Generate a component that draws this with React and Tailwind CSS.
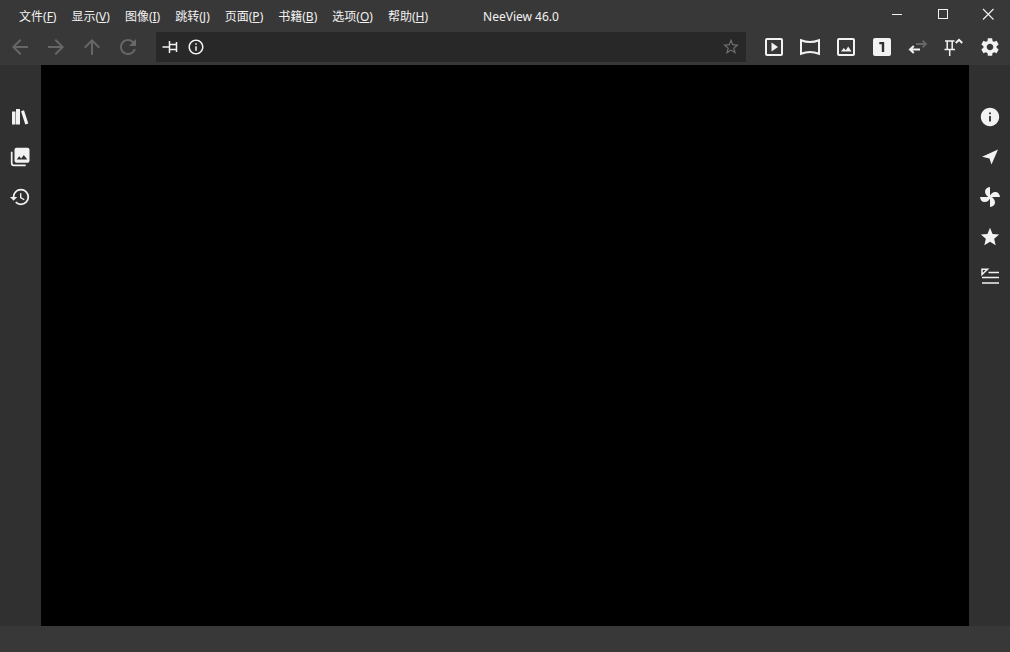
import React, { useState } from 'react';
import {
  MdArrowBack,
  MdArrowForward,
  MdArrowUpward,
  MdHistory,
  MdInfo,
  MdOutlineInfo,
  MdRefresh,
  MdSettings,
  MdStar,
} from 'react-icons/md';

const menus = [
  { label: '文件', accessKey: 'F' },
  { label: '显示', accessKey: 'V' },
  { label: '图像', accessKey: 'I' },
  { label: '跳转', accessKey: 'J' },
  { label: '页面', accessKey: 'P' },
  { label: '书籍', accessKey: 'B' },
  { label: '选项', accessKey: 'O' },
  { label: '帮助', accessKey: 'H' },
];

const Icon = ({ children, className = 'h-5 w-5' }) => (
  <svg viewBox="0 0 20 20" className={className} fill="none" stroke="currentColor" aria-hidden="true">
    {children}
  </svg>
);

// Window caption icons
const MinimizeIcon = () => (
  <Icon>
    <path d="M5 10.5h10" />
  </Icon>
);

const MaximizeIcon = () => (
  <Icon>
    <rect x="5.5" y="5.5" width="9" height="9" />
  </Icon>
);

const CloseIcon = () => (
  <Icon>
    <path d="M5 5l10.5 10.5M15.5 5L5 15.5" strokeWidth="1.1" />
  </Icon>
);

// Address bar icons
const PinSideIcon = () => (
  <Icon>
    <path d="M1.5 10H8M8.5 4v12M15.5 5v10M8.500 7.500h7M8.500 12.500h7" strokeWidth="1.5" />
  </Icon>
);

const StarOutlineIcon = () => (
  <Icon>
    <path d="M10 3.3l1.7 4.400 4.700.4-3.600 3 1.200 4.500L10 13.100l-4 2.500 1.200-4.500-3.600-3 4.700-.4z" strokeWidth="1.2" />
  </Icon>
);

// Toolbar icons
const SlideShowIcon = () => (
  <Icon>
    <rect x="2" y="2" width="16" height="16" rx="1" strokeWidth="2" />
    <path d="M7.5 5.500v9l6.500-4.500z" fill="currentColor" stroke="none" />
  </Icon>
);

const PanoramaIcon = () => (
  <Icon>
    <path d="M1 3.200Q10 6.800 19 3.200v13.600Q10 13.200 1 16.800z" strokeWidth="2" />
  </Icon>
);

const PictureIcon = () => (
  <Icon>
    <rect x="2" y="2" width="16" height="16" rx="1" strokeWidth="2" />
    <path d="M5 14.500l2.800-3.500 2 2.200 2.400-3.700 3.300 5z" fill="currentColor" stroke="none" />
  </Icon>
);

const SinglePageIcon = () => (
  <Icon>
    <rect x="1" y="1" width="18" height="18" rx="2" fill="currentColor" stroke="none" />
    <path d="M7.300 6.100H11V15" stroke="#303030" strokeWidth="2.4" />
  </Icon>
);

const DirectionIcon = () => (
  <Icon>
    <path d="M8 7h9M14.500 3.700L18 7l-3.500 3.300" stroke="#666666" strokeWidth="1.8" />
    <path d="M12 12.500H3M5.800 9L2 12.500 5.800 16" strokeWidth="2" />
  </Icon>
);

const PinUpIcon = () => (
  <Icon>
    <path d="M1 4h9.500M3.200 4v8M8.200 4v8M.500 12.500H11M5.700 12.500V19" strokeWidth="1.5" />
    <path d="M11.800 6L15 2.800 18.200 6" strokeWidth="2" />
  </Icon>
);

// Side panel icons
const BookshelfIcon = () => (
  <Icon>
    <path d="M2 4.500h3.500v13H2zM6 2h4v15.500H6zM11 4.200l3-.9 4.300 13.300-3 1z" fill="currentColor" stroke="none" />
  </Icon>
);

const PageListIcon = () => (
  <Icon>
    <path d="M1.700 4.700v11.600q0 2 2 2h12" strokeWidth="1.7" />
    <rect x="4.5" y=".7" width="15" height="15" rx="2" fill="currentColor" stroke="none" />
    <path d="M6.700 12.500l2.500-3.300 2 2.300 2.600-3.500 3.500 4.500z" fill="#303030" stroke="none" />
  </Icon>
);

const NavigateIcon = () => (
  <Icon>
    <path d="M18 2.500L11.500 17.500 9.500 11.500 2 9.700z" fill="currentColor" stroke="none" />
  </Icon>
);

const FanIcon = () => (
  <Icon>
    <g fill="currentColor" stroke="none">
      <path d="M10 11C7 9.500 5 7.500 5 4.500 5 2 7 .3 10 0z" />
      <path d="M9 10C10.500 7 12.500 5 15.500 5 18 5 19.700 7 20 10z" />
      <path d="M10 9C13 10.500 15 12.500 15 15.500 15 18 13 19.700 10 20z" />
      <path d="M11 10C9.500 13 7.500 15 4.500 15 2 15 .3 13 0 10z" />
    </g>
  </Icon>
);

const PlaylistIcon = () => (
  <Icon>
    <path d="M8.500 5.500H19M2 10.500h17M2 16h17" strokeWidth="1.5" />
    <path d="M2 7.500V2.200h5.500z" strokeWidth="1.5" />
  </Icon>
);

const toolbarItems = [
  { label: '幻灯片', icon: <SlideShowIcon /> },
  { label: '全景', icon: <PanoramaIcon /> },
  { label: '图像', icon: <PictureIcon /> },
  { label: '单页', icon: <SinglePageIcon /> },
  { label: '方向', icon: <DirectionIcon /> },
  { label: '固定菜单', icon: <PinUpIcon /> },
  { label: '设置', icon: <MdSettings className="h-[22px] w-[22px]" /> },
];

const leftPanels = [
  { label: '书架', icon: <BookshelfIcon /> },
  { label: '页面列表', icon: <PageListIcon /> },
  { label: '历史', icon: <MdHistory className="h-[22px] w-[22px]" /> },
];

const rightPanels = [
  { label: '信息', icon: <MdInfo className="h-[22px] w-[22px]" /> },
  { label: '导航', icon: <NavigateIcon /> },
  { label: '效果', icon: <FanIcon /> },
  { label: '书签', icon: <MdStar className="h-[22px] w-[22px]" /> },
  { label: '播放列表', icon: <PlaylistIcon /> },
];

const ToolButton = ({ label, children, disabled }) => (
  <button
    aria-label={label}
    disabled={disabled}
    className="flex h-[30px] w-9 items-center justify-center hover:bg-[#4a4a4a] disabled:text-[#676767] disabled:hover:bg-transparent"
  >
    {children}
  </button>
);

const SideBar = ({ label, panels, align }) => (
  <nav aria-label={label} className={`flex w-[41px] shrink-0 flex-col bg-[#303030] pt-8 ${align}`}>
    {panels.map((panel) => (
      <button
        key={panel.label}
        aria-label={panel.label}
        className="flex h-10 w-10 items-center justify-center hover:bg-[#4a4a4a]"
      >
        {panel.icon}
      </button>
    ))}
  </nav>
);

const App = () => {
  const [address, setAddress] = useState('');

  return (
    <div className="flex min-h-screen flex-col bg-[#383838] font-['Noto_Sans','Noto_Sans_CJK_SC',sans-serif] text-xs text-[#f2f2f2]">
      {/* Title bar */}
      <header className="flex h-8 items-start">
        <div className="flex flex-1 items-center">
          <nav aria-label="菜单" className="flex gap-px pl-3">
            {menus.map((menu) => (
              <button key={menu.label} className="h-8 px-[7px] pt-0.5 whitespace-nowrap hover:bg-[#4a4a4a]">
                {menu.label}(<span className="underline">{menu.accessKey}</span>)
              </button>
            ))}
          </nav>
          <h1 className="ml-12 pt-0.5 whitespace-nowrap">NeeView 46.0</h1>
        </div>
        <div className="flex">
          <button aria-label="最小化" className="flex h-7 w-[46px] items-center justify-center hover:bg-[#4a4a4a]">
            <MinimizeIcon />
          </button>
          <button aria-label="最大化" className="flex h-7 w-[46px] items-center justify-center hover:bg-[#4a4a4a]">
            <MaximizeIcon />
          </button>
          <button aria-label="关闭" className="flex h-7 w-11 items-center justify-center hover:bg-[#c42b1c]">
            <CloseIcon />
          </button>
        </div>
      </header>

      {/* Toolbar */}
      <div className="flex gap-[10px] px-0.5 pb-[3px]">
        <div className="flex">
          <ToolButton label="后退" disabled>
            <MdArrowBack className="h-6 w-6" />
          </ToolButton>
          <ToolButton label="前进" disabled>
            <MdArrowForward className="h-6 w-6" />
          </ToolButton>
          <ToolButton label="上一级" disabled>
            <MdArrowUpward className="h-6 w-6" />
          </ToolButton>
          <ToolButton label="刷新" disabled>
            <MdRefresh className="h-6 w-6" />
          </ToolButton>
        </div>

        <div className="flex h-[30px] min-w-0 flex-1 items-center bg-[#282828] px-[5px]">
          <button aria-label="固定" className="pr-[6px]">
            <PinSideIcon />
          </button>
          <button aria-label="书籍信息">
            <MdOutlineInfo className="h-[18px] w-[18px]" />
          </button>
          <input
            type="text"
            aria-label="地址"
            value={address}
            onChange={(e) => setAddress(e.target.value)}
            className="min-w-0 flex-1 bg-transparent px-2 outline-none"
          />
          <button aria-label="添加书签" className="text-[#707070]">
            <StarOutlineIcon />
          </button>
        </div>

        <div className="flex">
          {toolbarItems.map((item) => (
            <ToolButton key={item.label} label={item.label}>
              {item.icon}
            </ToolButton>
          ))}
        </div>
      </div>

      {/* Viewer */}
      <div className="flex flex-1">
        <SideBar label="左侧面板" panels={leftPanels} align="items-start" />
        <main className="flex-1 bg-black" />
        <SideBar label="右侧面板" panels={rightPanels} align="items-end" />
      </div>

      <footer className="h-[26px]" />
    </div>
  );
};

export default App;
